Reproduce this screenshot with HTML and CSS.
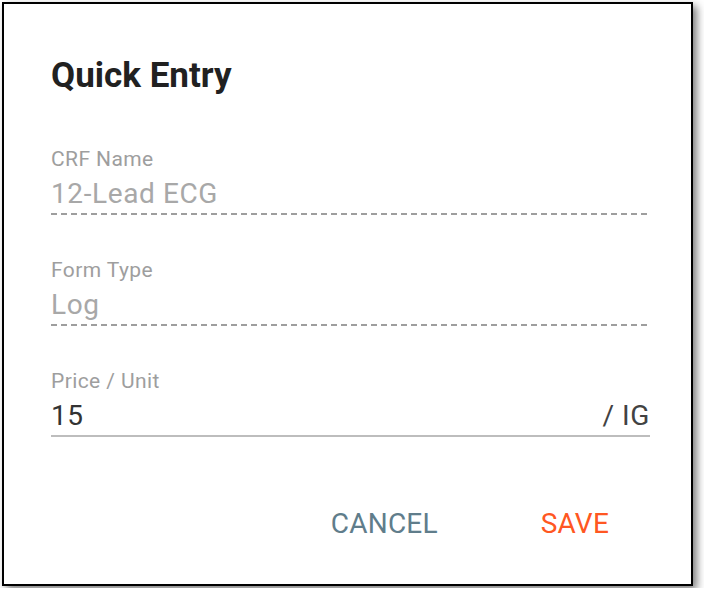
FILE: index.html
```html
<!DOCTYPE html>
<html lang="en">
<head>
  <meta charset="UTF-8">
  <meta name="viewport" content="width=device-width, initial-scale=1.0">
  <title>Quick Entry</title>
  <link rel="stylesheet" href="styles.css">
</head>
<body>
  <div class="dialog">
    <h1 class="dialog-title">Quick Entry</h1>

    <div class="field disabled">
      <label class="field-label">CRF Name</label>
      <div class="field-input">
        <span class="field-value">12-Lead ECG</span>
      </div>
    </div>

    <div class="field disabled">
      <label class="field-label">Form Type</label>
      <div class="field-input">
        <span class="field-value">Log</span>
      </div>
    </div>

    <div class="field">
      <label class="field-label">Price / Unit</label>
      <div class="field-input">
        <span class="field-value">15</span>
        <span class="field-suffix">/ IG</span>
      </div>
    </div>

    <div class="dialog-actions">
      <button class="btn btn-cancel">CANCEL</button>
      <button class="btn btn-save">SAVE</button>
    </div>
  </div>
</body>
</html>
```

FILE: styles.css
```css
body {
  margin: 0;
  padding: 2px;
  font-family: Roboto, "Noto Sans", Arial, sans-serif;
  background-color: #fff;
}

.dialog {
  width: 691px;
  height: 584px;
  box-sizing: border-box;
  border: 2px solid #000;
  background-color: #fff;
  box-shadow: 4px 4px 8px rgba(0, 0, 0, 0.5);
  padding: 0 41px 0 47px;
  display: flex;
  flex-direction: column;
}

.dialog-title {
  margin: 52px 0 0;
  font-size: 35px;
  line-height: 40px;
  font-weight: 700;
  color: #212121;
}

.field {
  margin-top: 51px;
}

.field + .field {
  margin-top: 43px;
}

.field-label {
  display: block;
  font-size: 21px;
  line-height: 24px;
  letter-spacing: 0.4px;
  color: #9e9e9e;
}

.field-input {
  display: flex;
  justify-content: space-between;
  align-items: baseline;
  padding: 7px 0 3px;
  border-bottom: 2px solid #bdbdbd;
  font-size: 28px;
  line-height: 32px;
  letter-spacing: 0.6px;
  color: #333;
}

.field.disabled .field-input {
  border-bottom: none;
  padding-bottom: 5px;
  background-image: repeating-linear-gradient(to right, #9e9e9e 0 6px, transparent 6px 10px);
  background-size: 100% 2px;
  background-repeat: no-repeat;
  background-position: left bottom;
  color: #a8a8a8;
}

.field-suffix {
  color: #424242;
}

.dialog-actions {
  display: flex;
  justify-content: flex-end;
  gap: 103px;
  margin-top: 71px;
  padding-right: 41px;
}

.btn {
  background: none;
  border: none;
  padding: 0;
  font-family: inherit;
  font-size: 28px;
  line-height: 32px;
  letter-spacing: 0.2px;
  cursor: pointer;
}

.btn-cancel {
  color: #607d8b;
}

.btn-save {
  color: #ff5722;
}
```
